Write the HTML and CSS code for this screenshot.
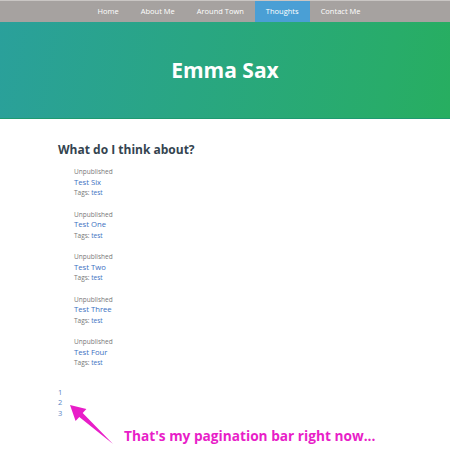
FILE: index.html
```html
<!DOCTYPE html>
<html>
<head>
<meta charset="utf-8">
<link rel="stylesheet" href="styles.css">
</head>
<body>
<nav class="nav">
  <a class="nav-item">Home</a>
  <a class="nav-item">About Me</a>
  <a class="nav-item">Around Town</a>
  <a class="nav-item active">Thoughts</a>
  <a class="nav-item">Contact Me</a>
</nav>
<header class="hero">
  <h1 class="title">Emma Sax</h1>
</header>
<main class="content">
  <h2 class="heading">What do I think about?</h2>
  <ul class="posts">
    <li class="post"><div class="status">Unpublished</div><a class="post-title">Test Six</a><div class="tags">Tags: <a class="tag">test</a></div></li>
    <li class="post"><div class="status">Unpublished</div><a class="post-title">Test One</a><div class="tags">Tags: <a class="tag">test</a></div></li>
    <li class="post"><div class="status">Unpublished</div><a class="post-title">Test Two</a><div class="tags">Tags: <a class="tag">test</a></div></li>
    <li class="post"><div class="status">Unpublished</div><a class="post-title">Test Three</a><div class="tags">Tags: <a class="tag">test</a></div></li>
    <li class="post"><div class="status">Unpublished</div><a class="post-title">Test Four</a><div class="tags">Tags: <a class="tag">test</a></div></li>
  </ul>
  <div class="pager">
    <a class="page">1</a>
    <a class="page">2</a>
    <a class="page">3</a>
  </div>
  <p class="note">That's my pagination bar right now...</p>
</main>
<svg class="arrow" width="60" height="50" viewBox="0 0 60 50">
  <polygon points="10,5 26.4,9 22.7,13 53,44 19.3,17 15.6,21" fill="#e81ec8"/>
</svg>
</body>
</html>
```
FILE: styles.css
```css
* { box-sizing: border-box; }
body {
  margin: 0;
  font-family: "Open Sans", "DejaVu Sans", sans-serif;
  background: #fff;
}
.nav {
  display: flex;
  justify-content: center;
  background: #a6a2a0;
  border-top: 1px solid #c9c6c4;
  height: 22px;
  padding-left: 8px;
}
.nav-item {
  color: #fff;
  font-size: 7.5px;
  line-height: 21px;
  padding: 0 11px;
}
.nav-item.active { background: #4a9fd5; }
.hero {
  height: 97px;
  background: linear-gradient(100deg, #2aa09b 0%, #28ac6a 85%, #27ae60 100%);
  border-bottom: 1px solid #1e9a70;
  display: flex;
  align-items: center;
  justify-content: center;
}
.title {
  margin: 0;
  color: #fff;
  font-size: 21px;
  font-weight: 700;
  padding-bottom: 1px;
}
.content {
  padding: 22px 0 0 58px;
}
.heading {
  margin: 0 0 9px;
  font-size: 12px;
  font-weight: 700;
  color: #34444f;
  line-height: 17px;
}
.posts {
  list-style: none;
  margin: 0;
  padding: 0 0 0 16px;
  display: flex;
  flex-direction: column;
  gap: 11.5px;
}
.post { display: flex; flex-direction: column; }
.status { font-size: 6.5px; color: #777; line-height: 9.5px; }
.post-title { font-size: 7.7px; color: #3c6fbf; line-height: 10.5px; }
.tags { font-size: 6.5px; color: #777; line-height: 11px; }
.tag { color: #3c6fbf; }
.pager {
  margin-top: 19px;
  display: flex;
  flex-direction: column;
}
.page { font-size: 7.5px; color: #5a86c5; line-height: 10.3px; }
.arrow {
  position: absolute;
  left: 60px;
  top: 400px;
}
.note {
  margin: 8px 0 0 66px;
  font-size: 13.7px;
  font-weight: 700;
  color: #e81ec8;
}
```
